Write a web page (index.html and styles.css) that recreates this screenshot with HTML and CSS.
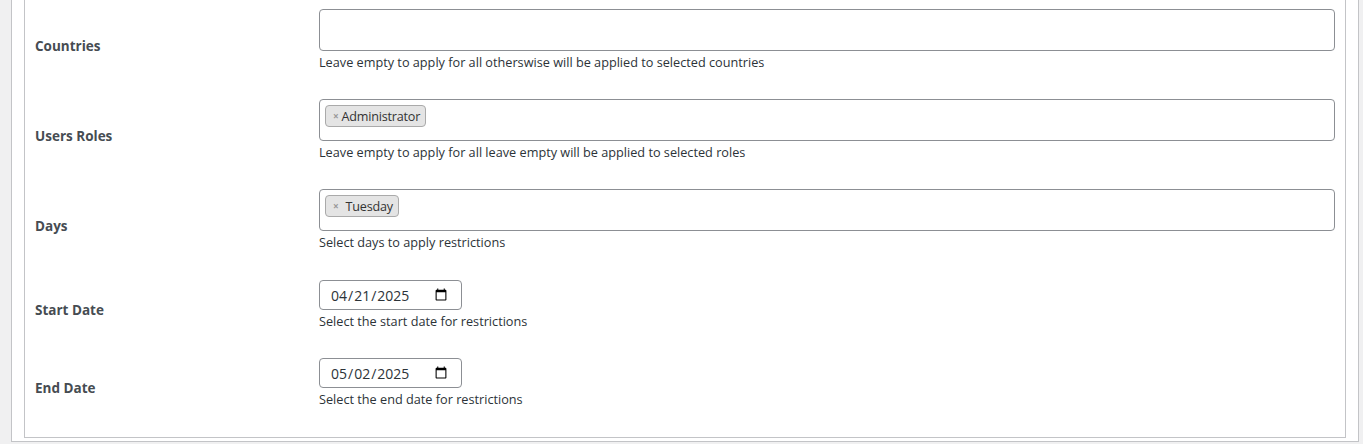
FILE: index.html
```html
<!DOCTYPE html>
<html lang="en">
<head>
  <meta charset="UTF-8" />
  <meta name="viewport" content="width=device-width, initial-scale=1.0"/>
  <title>Restrictions</title>
  <link rel="stylesheet" href="styles.css">
</head>
<body>
<div class="wrap">
  <div class="postbox">
    <div class="inside">
      <div class="row">
        <div class="label">Countries</div>
        <div class="field">
          <div class="multi"></div>
          <p class="description">Leave empty to apply for all otherswise will be applied to selected countries</p>
        </div>
      </div>

      <div class="row">
        <div class="label">Users Roles</div>
        <div class="field">
          <div class="multi">
            <span class="choice"><span class="remove tight">×</span>Administrator</span>
          </div>
          <p class="description">Leave empty to apply for all leave empty will be applied to selected roles</p>
        </div>
      </div>

      <div class="row">
        <div class="label">Days</div>
        <div class="field">
          <div class="multi">
            <span class="choice"><span class="remove">×</span>Tuesday</span>
          </div>
          <p class="description">Select days to apply restrictions</p>
        </div>
      </div>

      <div class="row short">
        <div class="label">Start Date</div>
        <div class="field">
          <input class="date" type="date" value="2025-04-21">
          <p class="description">Select the start date for restrictions</p>
        </div>
      </div>

      <div class="row short">
        <div class="label">End Date</div>
        <div class="field">
          <input class="date" type="date" value="2025-05-02">
          <p class="description">Select the end date for restrictions</p>
        </div>
      </div>
    </div>
  </div>
</div>
</body>
</html>
```

FILE: styles.css
```css
* {
  margin: 0;
  padding: 0;
  box-sizing: border-box;
}

body {
  font-family: "Open Sans", "Noto Sans", sans-serif;
  background: #f0f0f1;
  color: #3c434a;
  font-size: 13px;
}

.wrap {
  padding: 0 4px 0 11px;
}

.postbox {
  background: #fff;
  border: 1px solid #c3c4c7;
  border-top: none;
  padding: 0 12px 3px 12px;
}

.inside {
  border: 1px solid #c3c4c7;
  border-top: none;
  padding: 0 10px 11px 10px;
}

.row {
  display: grid;
  grid-template-columns: 284px 1fr;
  align-items: center;
}

.label {
  font-weight: bold;
  font-size: 13.5px;
  color: #464c52;
  padding-top: 2px;
}

.field {
  padding: 9px 0 18px;
}

.row.short .field {
  padding: 10px 0 17px;
}

.multi {
  height: 42px;
  border: 1px solid #8c8f94;
  border-radius: 4px;
  padding: 5px;
  display: flex;
  align-items: flex-start;
}

.choice {
  display: inline-flex;
  align-items: center;
  height: 22px;
  padding: 0 5px 0 7px;
  background: #e4e4e4;
  border: 1px solid #aaa;
  border-radius: 4px;
  color: #333;
  font-size: 12.6px;
  letter-spacing: -0.2px;
}

.remove {
  color: #999;
  font-weight: bold;
  font-size: 10px;
  margin-right: 7px;
}

.remove.tight {
  margin-right: 3px;
}

.description {
  margin-top: 2px;
  line-height: 19px;
  font-size: 12.7px;
  color: #2c3338;
}

.date {
  display: block;
  width: 143px;
  height: 30px;
  border: 1px solid #8c8f94;
  border-radius: 4px;
  padding: 0 11px 0 10px;
  font-family: inherit;
  font-size: 14px;
  color: #2c3338;
  background: #fff;
}
```
